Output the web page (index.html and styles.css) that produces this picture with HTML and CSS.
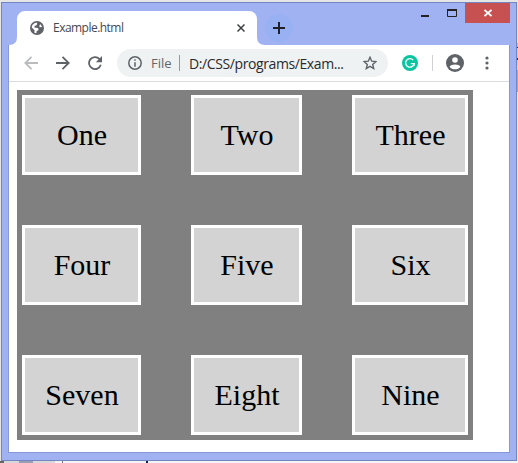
FILE: index.html
```
<!DOCTYPE html>
<html lang="en">
<head>
<meta charset="utf-8">
<title>Example.html</title>
<link rel="stylesheet" href="styles.css">
</head>
<body>
<div class="window">
  <header class="titlebar">
    <svg class="tab-foot" viewBox="0 0 8 8" width="8" height="8"><path d="M8 0V8H0Q8 8 8 0Z" fill="#fff"/></svg>
    <div class="tab">
      <svg class="globe" viewBox="0 0 14 14" width="14" height="14"><circle cx="7" cy="7" r="7" fill="#5f6368"/><path d="M7.2 1.7 6.8 4 4.7 5.1 4.3 6.5 8 7 8.6 9 6.6 10.2 6.4 12.3 4.4 11.7 4.5 9.3 1.8 6.5C1.8 3.8 4 1.6 7.2 1.7ZM9.4 4.2 10.4 3.2 12.2 6 9.6 6.2Z" fill="#fff"/></svg>
      <span class="tab-title">Example.html</span>
      <svg class="tab-close" viewBox="0 0 8 8" width="8" height="8"><path d="M.5.5l7 7M7.5.5l-7 7" stroke="#3c4043" stroke-width="1.5"/></svg>
    </div>
    <svg class="tab-foot" viewBox="0 0 8 8" width="8" height="8"><path d="M0 0V8H8Q0 8 0 0Z" fill="#fff"/></svg>
    <div class="new-tab"><svg viewBox="0 0 12 12" width="12" height="12"><path d="M6 0v12M0 6h12" stroke="#202124" stroke-width="2"/></svg></div>
    <div class="controls">
      <svg class="minimize" viewBox="0 0 8 2" width="8" height="2"><path d="M0 1h8" stroke="#222" stroke-width="2"/></svg>
      <svg class="maximize" viewBox="0 0 10 8" width="10" height="8"><path d="M.5 1v6.5h9V1" fill="none" stroke="#222"/><path d="M0 1h10" stroke="#222" stroke-width="2"/></svg>
      <div class="close"><svg viewBox="0 0 8 8" width="8" height="8"><path d="M.5 1l7 6M7.5 1l-7 6" stroke="#fff" stroke-width="1.7"/></svg></div>
    </div>
  </header>
  <nav class="toolbar">
    <svg class="back" viewBox="0 0 14 14" width="14" height="14"><path d="M14 7H1.5M7.5.8 1.3 7l6.2 6.2" fill="none" stroke="#babcbe" stroke-width="1.8"/></svg>
    <svg class="forward" viewBox="0 0 14 14" width="14" height="14"><path d="M0 7h12.5M6.5.8 12.7 7l-6.2 6.2" fill="none" stroke="#5f6368" stroke-width="1.8"/></svg>
    <svg class="reload" viewBox="0 0 14 14" width="14" height="14"><path d="M12.8 8.8A6 6 0 1 1 11.5 3L12 3.6" fill="none" stroke="#5f6368" stroke-width="1.8"/><path d="M14 0v6.2H7.8Z" fill="#5f6368"/></svg>
    <div class="address">
      <svg class="info" viewBox="0 0 14 14" width="14" height="14"><circle cx="7" cy="7" r="6.2" fill="none" stroke="#5f6368" stroke-width="1.5"/><path d="M7 3.3v1.5M7 6.2v4.5" stroke="#5f6368" stroke-width="1.5"/></svg>
      <span class="scheme">File</span>
      <span class="url-rule"></span>
      <span class="url">D:/CSS/programs/Exam...</span>
      <svg class="star" viewBox="0 0 14 14" width="14" height="14"><path d="M7 1.3l1.7 3.9 4.2.4-3.2 2.8 1 4.1L7 10.3l-3.7 2.2 1-4.1L1.1 5.6l4.2-.4Z" fill="none" stroke="#5f6368" stroke-width="1.4"/></svg>
    </div>
    <svg class="ext" viewBox="0 0 16 16" width="16" height="16"><circle cx="8" cy="8" r="8" fill="#0bc4a0"/><path d="M11.2 5A4.3 4.3 0 1 0 12.2 8.7H8.8" fill="none" stroke="#fff" stroke-width="1.3"/><path d="M12.2 8.4v2.6" stroke="#fff"/></svg>
    <span class="rule"></span>
    <svg class="avatar" viewBox="0 0 18 18" width="18" height="18"><circle cx="9" cy="9" r="9" fill="#5f6368"/><circle cx="9" cy="6" r="2.8" fill="#fff"/><path d="M3.6 12.7C5 9.7 13 9.7 14.4 12.7 12 16.2 6 16.2 3.6 12.7Z" fill="#fff"/></svg>
    <svg class="menu" viewBox="0 0 4 14" width="4" height="14"><g fill="#5f6368"><circle cx="2" cy="2" r="1.6"/><circle cx="2" cy="7" r="1.6"/><circle cx="2" cy="12" r="1.6"/></g></svg>
  </nav>
  <main class="page">
    <div class="grid">
      <div>One</div><div>Two</div><div>Three</div>
      <div>Four</div><div>Five</div><div>Six</div>
      <div>Seven</div><div>Eight</div><div>Nine</div>
    </div>
  </main>
</div>
</body>
</html>
```
FILE: styles.css
```
* { box-sizing: border-box; }
body {
  margin: 0; width: 518px; height: 463px; padding: 2px 1px 2px; overflow: hidden; font-family: "Open Sans", sans-serif;
  background:
    linear-gradient(#111a60, #111a60) 146px 461px / 2px 2px no-repeat,
    linear-gradient(#777, #777) 62px 461px / 1px 2px no-repeat,
    linear-gradient(90deg, #666 0 4px, #d8d8d8 4px 19px, #9a9db5 19px 33px, #d8d8d8 33px 55px, #f4f4f4 55px) 0 461px / 518px 2px no-repeat,
    linear-gradient(#e4e4e6 0 43px, #a9c0e6 43px 47px, #20308a 47px 48px, #b9cdec 48px 58px, #20308a 58px 60px, #b9cdec 60px 65px, #d6d6d6 65px 70px, #aaa 70px 92px, #e6e8f0 92px) 517px 0 / 1px 463px no-repeat,
    #e6e6e6;
}
svg { display: block; flex: none; }
.window { width: 516px; height: 459px; background: #a0b2f2; border: 1px solid #7486c2; padding: 0 6px 7px; display: flex; flex-direction: column; }
.titlebar { height: 42px; display: flex; padding-left: 1px; align-items: flex-end; }
.tab { width: 240px; height: 34px; background: #fff; border-radius: 8px 8px 0 0; display: flex; align-items: center; padding: 0 12px 0 13px; }
.tab-title { margin-left: 9px; font-size: 12px; line-height: 16px; color: #45494d; letter-spacing: -0.53px; white-space: nowrap; }
.tab-close { margin-left: auto; }
.new-tab { width: 28px; height: 28px; border-radius: 50%; background: #98b1f3; display: flex; align-items: center; justify-content: center; margin: 0 0 3px 0; }
.controls { margin-left: auto; align-self: flex-start; display: flex; height: 20px; }
.minimize { margin: 12px 18px 0 0; }
.maximize { margin: 6px 8px 0 0; }
.close { width: 45px; height: 20px; background: #c75050; display: flex; align-items: center; justify-content: center; }
.toolbar { height: 37px; background: #fff; border: solid #8798d6; border-width: 0 1px; box-shadow: inset 0 -1px #dadce0; display: flex; align-items: center; padding: 0 20px 1px 15px; }
.forward { margin-left: 18px; }
.reload { margin-left: 18px; }
.address { width: 271px; height: 28px; border-radius: 14px; background: #eff2f3; margin-left: 15px; display: flex; align-items: center; padding: 0 11px; font-size: 14px; white-space: nowrap; }
.scheme { margin-left: 9px; width: 21px; color: #62666a; font-size: 13px; }
.url-rule { width: 1px; height: 16px; background: #96999c; margin: 0 9px 0 7px; }
.url { color: #292a2d; letter-spacing: -0.4px; }
.star { margin-left: auto; }
.ext { margin-left: 14px; }
.rule { width: 1px; height: 16px; background: #cfd1d4; margin: 0 13px 0 14px; }
.menu { margin-left: auto; }
.page { flex: 1; background: #fff; border: solid #8798d6; border-width: 0 1px 1px; padding: 8px; }
.grid { width: 456px; height: 350px; padding: 5px; background: #808080; display: grid; grid-template-columns: 119px 111px 116px; grid-template-rows: repeat(3, 80px); gap: 50px; font: 30px/34px "Liberation Serif", serif; }
.grid div { border: 3px solid #fff; background: #d3d3d3; display: flex; align-items: center; justify-content: center; padding-left: 1px; color: #000; }
```
